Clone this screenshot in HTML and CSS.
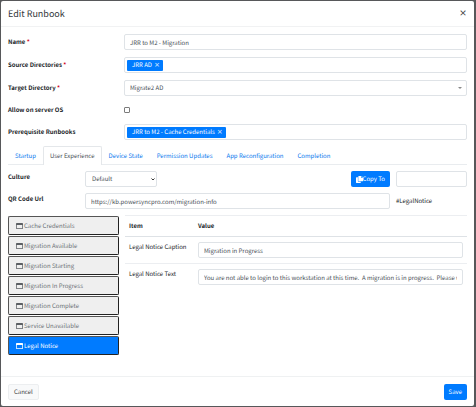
FILE: index.html
```html
<!DOCTYPE html>
<html lang="en">
<head>
<meta charset="utf-8">
<title>Edit Runbook</title>
<link rel="stylesheet" href="styles.css">
</head>
<body>
<svg class="defs" aria-hidden="true">
  <symbol id="window" viewBox="0 0 14 12"><path fill-rule="evenodd" d="M1.5 0h11A1.5 1.5 0 0 1 14 1.5v9a1.5 1.5 0 0 1-1.5 1.5h-11A1.5 1.5 0 0 1 0 10.500v-9A1.500 1.500 0 0 1 1.500 0zM1.500 4v6.500h11V4z"/></symbol>
  <symbol id="copy" viewBox="0 0 14 14"><path d="M5.500 0H10v3.500h4v6.300a.9.9 0 0 1-.9.900H5.500a.9.900 0 0 1-.9-.9V.9a.9.900 0 0 1 .9-.9zM11 0l3 2.700h-3zM0 3.500a.9.900 0 0 1 .9-.9h2.900v8.100c0 .5.400.9.900.9h4.900v1.500a.9.900 0 0 1-.9.900H.9a.9.900 0 0 1-.9-.9z"/></symbol>
</svg>
<form class="modal">
  <header class="modal-header">
    <h1>Edit Runbook</h1>
    <button type="button" class="close" aria-label="Close">×</button>
  </header>
  <main class="modal-body">
    <div class="row"><label for="name">Name <span class="req">*</span></label><input id="name" class="control" type="text" value="JRR to M2 - Migration"></div>
    <div class="row"><span class="label">Source Directories <span class="req">*</span></span><div class="control tags"><span class="tag">JRR AD <button type="button" aria-label="Remove">×</button></span></div></div>
    <div class="row"><label for="target">Target Directory <span class="req">*</span></label><div class="picker"><select id="target" class="control"><option>Migrate2 AD</option></select></div></div>
    <div class="row"><label for="server">Allow on server OS</label><div class="check"><input id="server" type="checkbox"></div></div>
    <div class="row"><span class="label">Prerequisite Runbooks</span><div class="control tags"><span class="tag">JRR to M2 - Cache Credentials <button type="button" aria-label="Remove">×</button></span></div></div>

    <nav class="tabs">
      <a href="#startup">Startup</a>
      <a href="#experience" class="active">User Experience</a>
      <a href="#device">Device State</a>
      <a href="#permission">Permission Updates</a>
      <a href="#app">App Reconfiguration</a>
      <a href="#completion">Completion</a>
    </nav>

    <div class="settings">
      <label for="culture">Culture</label>
      <div class="middle">
        <div class="culture">
          <select id="culture" class="control"><option>Default</option></select>
          <svg class="chevron" viewBox="0 0 8 6" aria-hidden="true"><path d="M1 1l3 3 3-3"/></svg>
        </div>
        <button type="button" class="btn primary copy"><svg class="copy-icon"><use href="#copy"/></svg>Copy To</button>
      </div>
      <input class="control" type="text" aria-label="Copy to">
      <label for="url">QR Code Url</label>
      <input id="url" class="control" type="text" value="https://kb.powersyncpro.com/migration-info">
      <span class="hash">#LegalNotice</span>
    </div>

    <div class="panel">
      <div class="side">
        <button type="button"><svg><use href="#window"/></svg>Cache Credentials</button>
        <button type="button"><svg><use href="#window"/></svg>Migration Available</button>
        <button type="button"><svg><use href="#window"/></svg>Migration Starting</button>
        <button type="button"><svg><use href="#window"/></svg>Migration In Progress</button>
        <button type="button"><svg><use href="#window"/></svg>Migration Complete</button>
        <button type="button"><svg><use href="#window"/></svg>Service Unavailable</button>
        <button type="button" class="active"><svg><use href="#window"/></svg>Legal Notice</button>
      </div>
      <div class="detail">
        <table>
          <thead><tr><th class="item">Item</th><th>Value</th></tr></thead>
          <tbody>
            <tr><td><label for="caption">Legal Notice Caption</label></td><td><input id="caption" class="control" type="text" value="Migration in Progress"></td></tr>
            <tr><td><label for="text">Legal Notice Text</label></td><td><input id="text" class="control" type="text" value="You are not able to login to this workstation at this time.  A migration is in progress.  Please wait until the migration is complete."></td></tr>
          </tbody>
        </table>
      </div>
    </div>
  </main>
  <footer class="modal-footer">
    <button type="button" class="btn cancel">Cancel</button>
    <button type="submit" class="btn primary">Save</button>
  </footer>
</form>
</body>
</html>
```
FILE: styles.css
```css
* { box-sizing: border-box; }

body {
  margin: 0;
  min-height: 100vh;
  padding: 1px 2px 1px 1px;
  display: flex;
  background: #57585a;
  color: #212529;
  font: 6px/10px "Noto Sans CJK SC", "Open Sans", sans-serif;
  text-rendering: geometricPrecision;
}

.defs { position: absolute; width: 0; height: 0; }
svg { fill: currentColor; flex: none; }

button, input, select { font: inherit; color: inherit; margin: 0; text-rendering: inherit; }

.modal {
  flex: 1;
  min-width: 0;
  display: flex;
  flex-direction: column;
  background: #fff;
  border-radius: 2px;
}

.modal-header {
  display: flex;
  justify-content: space-between;
  align-items: center;
  height: 26px;
  padding: 0 7px;
  border-bottom: 1px solid #f1f2f3;
}

h1 { margin: 0; font-size: 9px; font-weight: 400; line-height: 14px; color: #33373b; }

.close {
  border: 0;
  padding: 0;
  background: none;
  font-size: 8px;
  font-weight: 700;
  color: #444;
}

.modal-body { flex: 1; padding: 7px 7px 0; }

.row {
  display: grid;
  grid-template-columns: 116px 1fr;
  align-items: center;
  min-height: 16px;
  margin-bottom: 7px;
}

.row:nth-child(n + 3) { margin-bottom: 6px; }

.row > label, .label, .settings > label { font-weight: 700; }
.req { color: #d0021b; }

.control {
  width: 100%;
  height: 16px;
  min-width: 0;
  padding: 0 5px;
  border: 1px solid #dfe3e7;
  border-radius: 2px;
  background: #fff;
  color: #495057;
}

.tags { display: flex; align-items: center; padding: 0 2px; }

.tag {
  display: flex;
  align-items: center;
  height: 11px;
  gap: 2px;
  padding: 0 3px 0 5px;
  border-radius: 1px;
  background: #007bff;
  color: #fff;
}

.tag button { border: 0; padding: 0; background: none; font-weight: 700; opacity: .8; }

.picker, .culture { position: relative; }
.picker .control, .culture .control { display: block; appearance: none; }
.picker::after {
  content: "";
  position: absolute;
  right: 5px;
  top: 7px;
  border: 2px solid transparent;
  border-top-color: #888;
  border-bottom: 0;
}

.check { display: flex; }
.check input {
  appearance: none;
  width: 6px;
  height: 6px;
  border: 1px solid #7b7b7b;
  border-radius: 1px;
}
.check input:checked { background: #007bff; }

.tabs { display: flex; border-bottom: 1px solid #e9ecef; }

.tabs a {
  padding: 4px 6px 3px;
  border: 1px solid transparent;
  border-bottom: 0;
  color: #0878ee;
  text-decoration: none;
}

.tabs .active {
  margin-bottom: -1px;
  padding-bottom: 4px;
  border-color: #e4e7ea;
  border-radius: 2px 2px 0 0;
  background: #fff;
  color: #495057;
}

.settings {
  display: grid;
  grid-template-columns: 71px 1fr 71px;
  gap: 6px;
  margin-top: 6px;
}

.settings > label { margin: 1px 0 0; }
.middle { display: flex; justify-content: space-between; }
.culture { width: 72px; }
.culture .control { padding: 0 6px; }
.chevron {
  position: absolute;
  right: 2px;
  top: 7px;
  width: 4px;
  height: 3px;
  fill: none;
  stroke: #333;
  stroke-width: 2;
  pointer-events: none;
}
.hash { align-self: center; }

.btn {
  height: 16px;
  padding: 0 5px;
  border: 0;
  border-radius: 2px;
}

.primary { background: #007bff; color: #fff; }
.copy { display: flex; align-items: center; }
.copy-icon { width: 7px; height: 7px; }
.cancel { background: #f8f9fa; border: 1px solid #eceef0; color: #444; }

.panel {
  display: grid;
  grid-template-columns: 111px 1fr;
  gap: 6px;
  align-items: start;
  margin-top: 6px;
}

.side { display: grid; gap: 1px; padding-top: 1px; }

.side button {
  display: flex;
  align-items: center;
  gap: 1px;
  height: 19px;
  padding: 0 7px;
  border: 1px solid;
  border-color: #555 #222 #222 #555;
  border-radius: 2px;
  background: #efefef;
  color: #6d7277;
}

.side svg { width: 7px; height: 6px; color: #5c6064; }
.side .active { background: #007bff; color: #fff; }
.side .active svg { color: #fff; }

table { width: 100%; border-collapse: collapse; table-layout: fixed; }
th, td { padding: 5px 4px; border-top: 1px solid #eceef1; text-align: left; vertical-align: top; }
th { border-bottom: 1px solid #dee2e6; }
.item { width: 69px; }
td .control { display: block; }

.modal-footer {
  display: flex;
  justify-content: space-between;
  align-items: center;
  height: 30px;
  padding: 0 7px;
  border-top: 1px solid #eff1f2;
}
```
